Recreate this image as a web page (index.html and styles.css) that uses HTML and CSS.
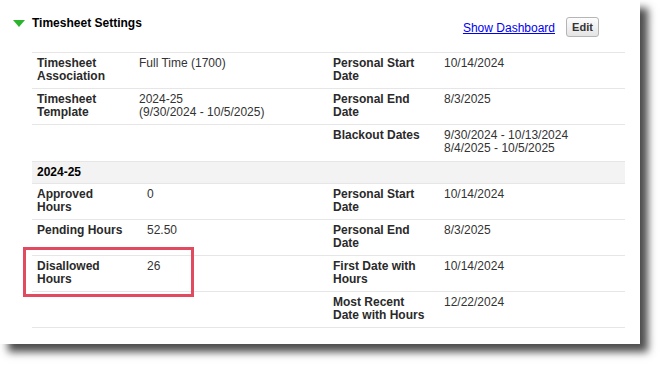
FILE: index.html
```html
<!DOCTYPE html>
<html lang="en">
  <head>
    <meta charset="UTF-8" />
    <meta name="viewport" content="width=device-width, initial-scale=1.0" />
    <title>Timesheet Settings</title>

    <link rel="stylesheet" href="styles.css">
  </head>
  <body>
    <div class="panel">
      <div class="panel-header">
        <div class="title">
          <span class="toggle"></span>
          <h2>Timesheet Settings</h2>
        </div>
        <div class="actions">
          <a href="#">Show Dashboard</a>
          <button>Edit</button>
        </div>
      </div>

      <!-- * Association / template -->
      <table class="details">
        <colgroup>
          <col style="width: 102px" />
          <col style="width: 194px" />
          <col style="width: 111px" />
          <col />
        </colgroup>
        <tr>
          <th>Timesheet Association</th>
          <td>Full Time (1700)</td>
          <th class="right">Personal Start Date</th>
          <td>10/14/2024</td>
        </tr>
        <tr>
          <th>Timesheet Template</th>
          <td>2024-25<br />(9/30/2024 - 10/5/2025)</td>
          <th class="right">Personal End Date</th>
          <td>8/3/2025</td>
        </tr>
        <tr>
          <th></th>
          <td></td>
          <th class="right">Blackout Dates</th>
          <td>9/30/2024 - 10/13/2024<br />8/4/2025 - 10/5/2025</td>
        </tr>
      </table>

      <!-- * Hours for the year -->
      <table class="details last">
        <colgroup>
          <col style="width: 110px" />
          <col style="width: 186px" />
          <col style="width: 111px" />
          <col />
        </colgroup>
        <tr class="section">
          <th colspan="4">2024-25</th>
        </tr>
        <tr>
          <th>Approved Hours</th>
          <td>0</td>
          <th class="right">Personal Start Date</th>
          <td>10/14/2024</td>
        </tr>
        <tr>
          <th>Pending Hours</th>
          <td>52.50</td>
          <th class="right">Personal End Date</th>
          <td>8/3/2025</td>
        </tr>
        <tr>
          <th>Disallowed Hours</th>
          <td>26</td>
          <th class="right">First Date with Hours</th>
          <td>10/14/2024</td>
        </tr>
        <tr>
          <th></th>
          <td></td>
          <th class="right">Most Recent Date with Hours</th>
          <td>12/22/2024</td>
        </tr>
      </table>

      <div class="highlight"></div>
    </div>
  </body>
</html>
```

FILE: styles.css
```css
* {
  margin: 0;
  padding: 0;
  box-sizing: border-box;
}

body {
  font-family: 'Liberation Sans', Arial, sans-serif;
  font-size: 12px;
  background-color: #fff;
  color: #333;
  min-height: 100vh;
}

.panel {
  position: relative;
  width: 640px;
  height: 344px;
  background-color: #fff;
  box-shadow: 8px 8px 8px rgba(0, 0, 0, 0.7);
}

.panel-header {
  height: 52px;
  display: flex;
  justify-content: space-between;
  padding: 0 41px 0 13px;

  & .title {
    display: flex;
    align-items: flex-start;
  }

  & .toggle {
    width: 0;
    height: 0;
    margin-top: 20px;
    margin-right: 7px;
    border-left: 6.5px solid transparent;
    border-right: 6.5px solid transparent;
    border-top: 7px solid #2cb52c;
  }

  & h2 {
    margin-top: 16px;
    font-size: 12px;
    line-height: 14px;
    font-weight: bold;
    color: #000;
  }

  & .actions {
    display: flex;
    align-items: center;
    gap: 11px;
    height: 20px;
    margin-top: 17px;
  }

  & a {
    color: #0000ee;
    line-height: 14px;
    margin-top: 1px;
  }

  & button {
    width: 33px;
    height: 20px;
    font-family: inherit;
    font-size: 11px;
    font-weight: bold;
    color: #333;
    background: linear-gradient(#fdfdfd, #e4e4e4);
    border: 1px solid #b5b5b5;
    border-radius: 3px;
  }
}

.details {
  margin-left: 32px;
  width: 593px;
  table-layout: fixed;
  border-collapse: collapse;

  & th,
  & td {
    height: 36px;
    padding: 4px 5px 5px;
    line-height: 13px;
    text-align: left;
    vertical-align: top;
    border-top: 1px solid #e6e6e6;
  }

  & th {
    padding-right: 16px;
    font-weight: bold;
    color: #2a2a2a;

    &.right {
      padding-right: 10px;
    }
  }

  & .section th {
    height: 22px;
    padding: 4px 5px;
    background-color: #f3f3f3;
    color: #000;
  }

  &.last tr:last-child th,
  &.last tr:last-child td {
    border-bottom: 1px solid #e6e6e6;
  }
}

.highlight {
  position: absolute;
  left: 23px;
  top: 247px;
  width: 171px;
  height: 50px;
  border: 3.5px solid #e24a60;
}
```
